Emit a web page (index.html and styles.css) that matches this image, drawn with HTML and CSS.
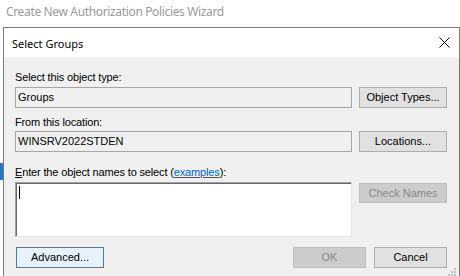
FILE: index.html
```html
<!DOCTYPE html>
<html>
<head>
<meta charset="utf-8">
<link rel="stylesheet" href="styles.css">
</head>
<body>
<div class="wintitle">Create New Authorization Policies Wizard</div>
<div class="behind-tab"></div>
<div class="dialog">
  <div class="titlebar">
    <span class="title">Select Groups</span>
    <svg class="close" width="11" height="11" viewBox="0 0 11 11"><path d="M0.5 0.5 L10.5 10.5 M10.5 0.5 L0.5 10.5" stroke="#000" stroke-width="1" fill="none"/></svg>
  </div>
  <div class="content">
    <div class="label l1">Select this object type:</div>
    <div class="row">
      <div class="field">Groups</div>
      <div class="btn">Object Types...</div>
    </div>
    <div class="label l2">From this location:</div>
    <div class="row">
      <div class="field">WINSRV2022STDEN</div>
      <div class="btn">Locations...</div>
    </div>
    <div class="label l3"><u>E</u>nter the object names to select (<span class="link">examples</span>):</div>
    <div class="row top">
      <div class="names"><span class="caret"></span></div>
      <div class="btn disabled check">Check Names</div>
    </div>
    <div class="footer">
      <div class="btn adv">Advanced...</div>
      <div class="spacer"></div>
      <div class="btn disabled small">OK</div>
      <div class="btn small">Cancel</div>
    </div>
  </div>
  <svg class="grip" width="8" height="8" viewBox="0 0 8 8">
    <rect x="6" y="0" width="2" height="2" fill="#c4c4c4"/>
    <rect x="3" y="3" width="2" height="2" fill="#c4c4c4"/>
    <rect x="6" y="3" width="2" height="2" fill="#c4c4c4"/>
    <rect x="0" y="6" width="2" height="2" fill="#c4c4c4"/>
    <rect x="3" y="6" width="2" height="2" fill="#c4c4c4"/>
    <rect x="6" y="6" width="2" height="2" fill="#c4c4c4"/>
  </svg>
</div>
</body>
</html>
```

FILE: styles.css
```css
html, body {
  margin: 0;
  padding: 0;
  background: #ffffff;
  width: 460px;
  height: 276px;
  overflow: hidden;
}
body {
  position: relative;
  font-family: "Liberation Sans", Arial, sans-serif;
}
.wintitle {
  height: 27px;
  padding-left: 6px;
  font-family: "Noto Sans", "Open Sans", sans-serif;
  font-size: 12px;
  line-height: 24px;
  color: #9a9a9a;
  letter-spacing: -0.35px;
}
.behind-tab {
  position: absolute;
  left: 0;
  top: 163px;
  width: 3px;
  height: 17px;
  background: #1c78d4;
}
.dialog {
  position: relative;
  margin-left: 3px;
  width: 455px;
  height: 260px;
  border: 1px solid #7a7a7a;
  border-bottom: none;
  background: #f0f0f0;
}
.titlebar {
  height: 29px;
  background: #ffffff;
  display: flex;
  align-items: center;
  justify-content: space-between;
  padding-left: 8px;
  padding-right: 9px;
}
.title {
  font-family: "Noto Sans", "Open Sans", sans-serif;
  font-size: 11px;
  color: #000;
  margin-top: 1px;
}
.close {
  display: block;
}
.content {
  padding: 14px 0 0 11px;
  font-size: 11px;
  color: #000;
}
.label {
  height: 13px;
  line-height: 13px;
  white-space: nowrap;
  letter-spacing: -0.15px;
}
.l1 { margin-bottom: 3px; }
.l2 { margin-top: 8px; margin-bottom: 2px; }
.l3 { margin-top: 14px; margin-bottom: 3px; }
.link {
  color: #0066cc;
  text-decoration: underline;
}
.row {
  display: flex;
  gap: 7px;
  align-items: center;
}
.row.top { align-items: flex-start; }
.field {
  box-sizing: border-box;
  width: 337px;
  height: 21px;
  border: 1px solid #a6a6a6;
  background: #f0f0f0;
  padding-left: 2px;
  line-height: 18px;
  font-size: 11px;
}
.btn {
  box-sizing: border-box;
  width: 88px;
  height: 21px;
  border: 1px solid #adadad;
  background: #e1e1e1;
  text-align: center;
  line-height: 19px;
  font-size: 11px;
  color: #000;
}
.btn.disabled {
  background: #cccccc;
  border-color: #bfbfbf;
  color: #8a8a8a;
}
.btn.check {
  margin-top: 1px;
  height: 20px;
  line-height: 18px;
}
.names {
  box-sizing: border-box;
  width: 337px;
  height: 55px;
  background: #ffffff;
  border-top: 1px solid #a0a0a0;
  border-left: 1px solid #a0a0a0;
  border-right: 1px solid #e3e3e3;
  border-bottom: 1px solid #e3e3e3;
  box-shadow: inset 1px 1px 0 #696969;
  padding: 3px 0 0 3px;
}
.caret {
  display: block;
  width: 1px;
  height: 13px;
  background: #000;
}
.footer {
  display: flex;
  margin-top: 10px;
  gap: 8px;
  width: 432px;
}
.spacer { flex: 1; }
.btn.adv {
  margin-left: 1px;
  background: #e5f1fb;
  border-color: #3c7fb1;
}
.btn.small { width: 73px; }
.grip {
  position: absolute;
  right: 3px;
  top: 240px;
}
```
